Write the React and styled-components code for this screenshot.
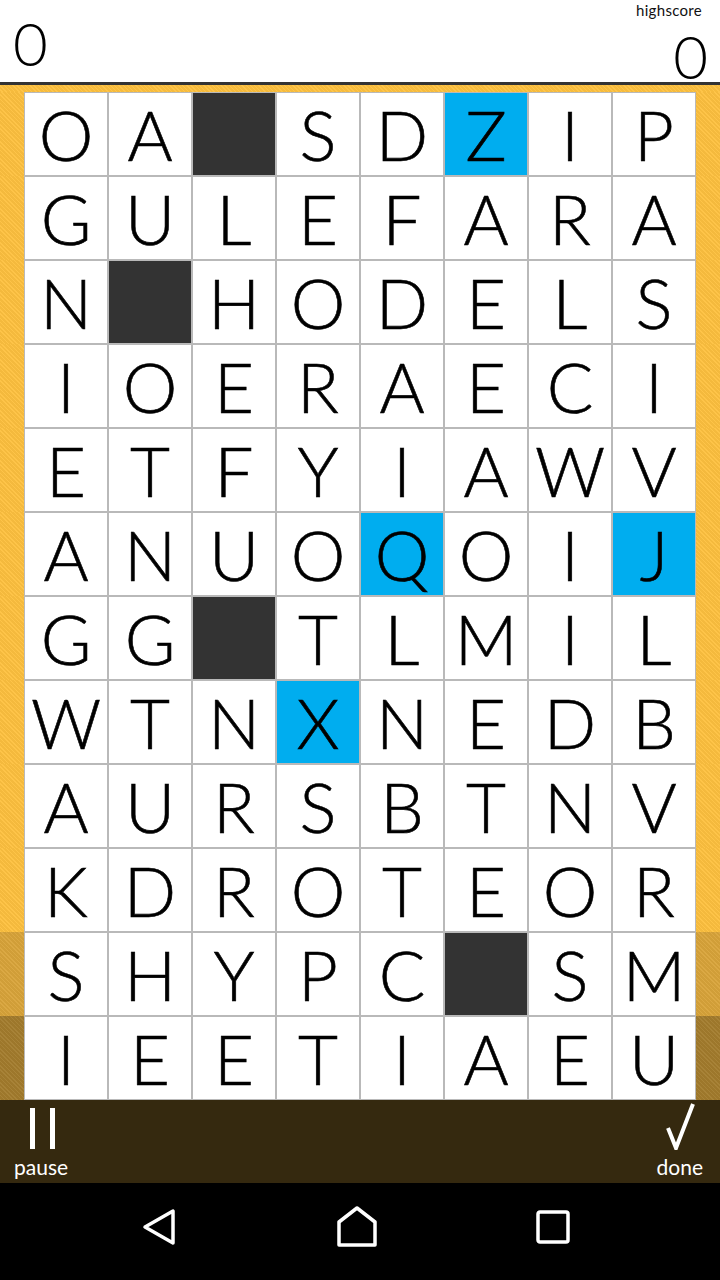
import React from 'react';
import styled, { createGlobalStyle } from 'styled-components';

const GlobalStyle = createGlobalStyle`
  html, body {
    margin: 0;
    padding: 0;
    background: #000;
  }
  * {
    box-sizing: border-box;
  }
`;

const Screen = styled.div`
  width: 720px;
  height: 1280px;
  display: flex;
  flex-direction: column;
  font-family: Lato, "Noto Sans", sans-serif;
  overflow: hidden;
`;

const Header = styled.div`
  height: 85px;
  background: #fff;
  border-bottom: 3px solid #333;
  display: flex;
  justify-content: space-between;
  padding: 0 12px 0 13px;
`;

const Score = styled.div`
  font-size: 60px;
  font-weight: 300;
  line-height: 1;
  color: #000;
  padding-top: 13px;
`;

const HighBox = styled.div`
  display: flex;
  flex-direction: column;
  align-items: flex-end;
  padding-top: 3px;
`;

const HighLabel = styled.div`
  font-size: 15px;
  color: #111;
  line-height: 1;
  margin-right: 6px;
  letter-spacing: 0.3px;
`;

const HighScore = styled(Score)`
  font-size: 60px;
  padding-top: 8px;
`;

const Board = styled.div`
  display: flex;
  flex-direction: column;
  padding-top: 7px;
  background: #fec13f;
  background-image: repeating-linear-gradient(
    45deg,
    rgba(255, 255, 255, 0.06) 0 1px,
    rgba(0, 0, 0, 0.03) 1px 3px
  );
`;

const Row = styled.div`
  display: flex;
  padding: 0 24px;
  background: ${(p) => p.$band};
  background-image: repeating-linear-gradient(
    45deg,
    rgba(255, 255, 255, 0.05) 0 1px,
    rgba(0, 0, 0, 0.04) 1px 3px
  );
`;

const Cell = styled.div`
  width: 84px;
  height: 84px;
  border: 1px solid #b9b9b9;
  background: ${(p) => (p.$kind === 'block' ? '#333' : p.$kind === 'hit' ? '#00adef' : '#fff')};
  display: flex;
  align-items: center;
  justify-content: center;
  font-size: 69px;
  font-weight: 300;
  color: #000;
  line-height: 1;
  -webkit-text-stroke: 0.6px #000;
`;

const Footer = styled.div`
  height: 83px;
  background: #35290f;
  display: flex;
  justify-content: space-between;
  align-items: flex-end;
  padding: 0 17px 6px 14px;
`;

const FootButton = styled.div`
  display: flex;
  flex-direction: column;
  align-items: center;
  color: #fff;
  font-size: 21px;
  line-height: 1;
  gap: 6px;
`;

const NavBar = styled.div`
  flex: 1;
  background: #000;
  display: flex;
  justify-content: space-between;
  align-items: center;
  padding: 0 150px 10px 141px;
`;

const grid = [
  'OA#SDZIP',
  'GULEFARA',
  'N#HODELS',
  'IOERAECI',
  'ETFYIAWV',
  'ANUOQOIJ',
  'GG#TLMIL',
  'WTNXNEDB',
  'AURSBTNV',
  'KDROTEOR',
  'SHYPC#SM',
  'IEETIAEU',
];

const hits = { '0-5': 1, '5-4': 1, '5-7': 1, '7-3': 1 };

const bandFor = (r) => (r === 10 ? '#d9a43a' : r === 11 ? '#a37c2d' : '#fec13f');

export default function App() {
  return (
    <Screen>
      <GlobalStyle />
      <Header>
        <Score>0</Score>
        <HighBox>
          <HighLabel>highscore</HighLabel>
          <HighScore>0</HighScore>
        </HighBox>
      </Header>
      <Board>
        {grid.map((line, r) => (
          <Row key={r} $band={bandFor(r)}>
            {line.split('').map((ch, c) => {
              const kind = ch === '#' ? 'block' : hits[`${r}-${c}`] ? 'hit' : 'plain';
              return (
                <Cell key={c} $kind={kind}>
                  {ch === '#' ? '' : ch}
                </Cell>
              );
            })}
          </Row>
        ))}
      </Board>
      <Footer>
        <FootButton>
          <svg width="34" height="44" viewBox="0 0 34 44">
            <rect x="6" y="2" width="5" height="41" fill="#fff" />
            <rect x="26" y="2" width="5" height="41" fill="#fff" />
          </svg>
          pause
        </FootButton>
        <FootButton>
          <svg width="34" height="48" viewBox="0 0 34 48">
            <path d="M5 26 L13 46 L30 2" stroke="#fff" strokeWidth="4" fill="none" strokeLinejoin="miter" />
          </svg>
          done
        </FootButton>
      </Footer>
      <NavBar>
        <svg width="36" height="40" viewBox="0 0 36 40">
          <path d="M32 4 L32 36 L4 20 Z" stroke="#fff" strokeWidth="3.5" fill="none" strokeLinejoin="round" />
        </svg>
        <svg width="42" height="42" viewBox="0 0 42 42">
          <path d="M3 16 L21 2 L39 16 L39 39 L3 39 Z" stroke="#fff" strokeWidth="3.5" fill="none" strokeLinejoin="round" />
        </svg>
        <svg width="34" height="34" viewBox="0 0 34 34">
          <rect x="2" y="2" width="30" height="30" rx="2" stroke="#fff" strokeWidth="3.5" fill="none" />
        </svg>
      </NavBar>
    </Screen>
  );
}
